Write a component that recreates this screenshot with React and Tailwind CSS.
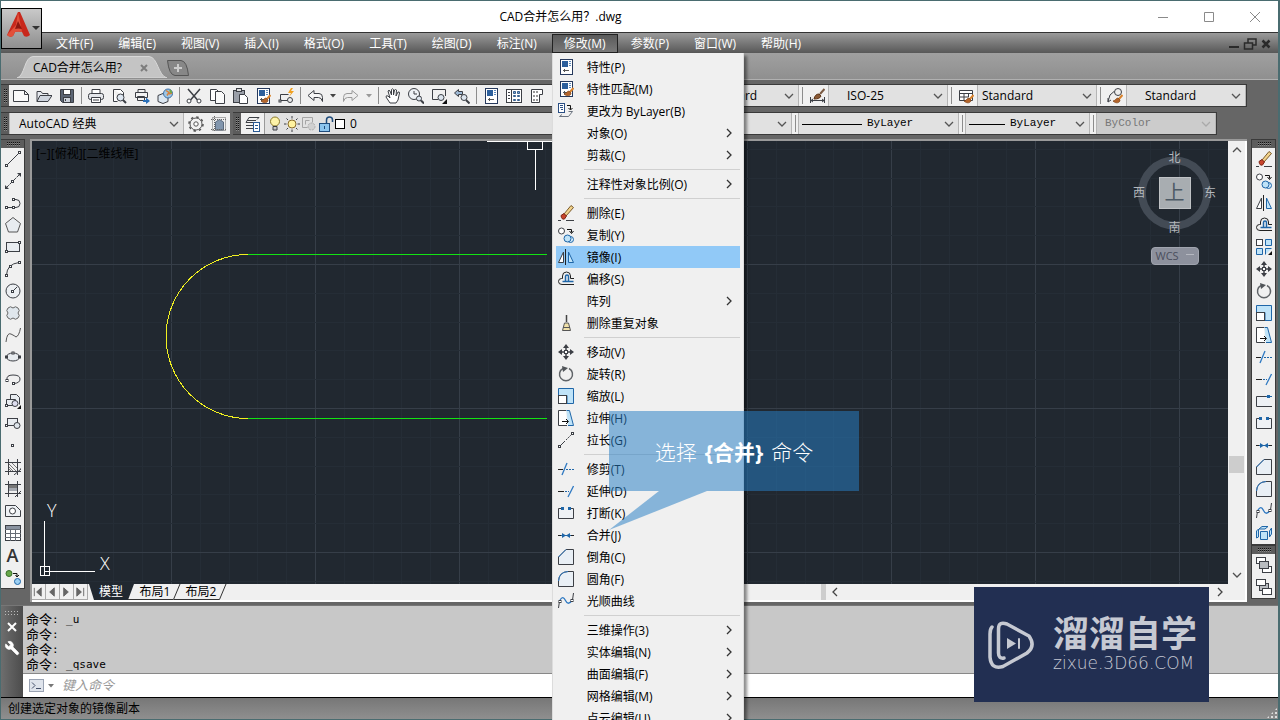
import React from "react";
import { Wrench } from "lucide-react";

const INK = "#3c3f45";
const BLUE = "#1f66a8";
const SKY = "#bfe3f8";

const Node = ({ x, y }) => (
  <rect x={x - 1} y={y - 1} width="2" height="2" fill="#fff" stroke={INK} />
);

const PropsSheet = () => (
  <>
    <rect x="2.500" y="0.500" width="12" height="15" fill="#fff" stroke="#26395c" />
    <rect x="4" y="2" width="6" height="6" fill="#2c5f9c" stroke="none" />
    <path d="M11 2.500h2M11 4.500h2M11 6.500h2" stroke="#5f8bbd" />
    <path d="M5 11.500h6M6.500 10v3" stroke="#555" />
  </>
);

const Brush = () => (
  <>
    <path d="M15.500 7L12 11" stroke="#d9822b" strokeWidth="2" />
    <path d="M6 13c2 0 3-3 5-3l2 2c0 3-4 4-7 1z" fill="#b5652a" stroke="#7b3f14" strokeWidth="0.700" />
  </>
);

const ICONS = {
  new: <path d="M0.500 2.500h11l4 4v7h-15zM11.500 2.500v4h4" fill="#fafafa" stroke={INK} />,
  open: (
    <>
      <path d="M1 13.500V3.500h4l1.500 2H12v2" fill="#e6e9ee" />
      <path d="M1 13.500l3-6h12l-4 6z" fill="#cfd5de" />
    </>
  ),
  save: (
    <>
      <path d="M1.500 1.500h13v13h-11l-2-2z" fill="#5b6473" />
      <rect x="4.500" y="1.500" width="7" height="5" fill="#fff" />
      <rect x="4.500" y="9.500" width="7" height="5" fill="#cdd3dc" />
      <path d="M6.500 11v2" />
    </>
  ),
  print: (
    <>
      <path d="M4 5.500V1.500h8v4" fill="#fff" />
      <rect x="0.500" y="5.500" width="15" height="6" rx="2" fill="#e4e6ea" />
      <path d="M3.500 9.500h9v5h-9z" fill="#fff" />
      <path d="M5 12h6" />
    </>
  ),
  preview: (
    <>
      <path d="M2.500 1.500h7l3 3v3M2.500 1.500v12h4" fill="#fff" />
      <circle cx="9.500" cy="9.500" r="3.500" fill="#dfe8f2" />
      <path d="M12 12l3 3" strokeWidth="2" />
    </>
  ),
  publish: (
    <>
      <path d="M4 4.500V1.500h7v3M1.500 4.500h12v5h-12zM3.500 8.500h7v4h-7z" fill="#f2f2f2" />
      <path d="M9 12h3V9.500l4 3.500-4 3v-2H9z" fill="#2a6fb8" stroke="none" />
    </>
  ),
  globe: (
    <>
      <path d="M1 7.500l5-2 5 2v6l-5 2-5-2z" fill="#dce7f1" />
      <circle cx="11" cy="5.500" r="4.500" fill="#9cc6e6" stroke="#3b6ea5" />
      <path d="M9 2.500l3 2-2 3M12 6l3-1" stroke="#d7803a" strokeWidth="1.500" />
      <path d="M13 2l1.500 3" stroke="#6fa843" strokeWidth="2" />
    </>
  ),
  cut: (
    <>
      <path d="M2 1l9.500 11M14 1L4.500 12" strokeWidth="1.500" />
      <circle cx="3" cy="13" r="2" fill="#fff" />
      <circle cx="13" cy="13" r="2" fill="#fff" />
    </>
  ),
  copyclip: (
    <>
      <path d="M1.500 1.500h6l3 3v8h-9z" fill="#fff" />
      <path d="M6.500 3.500h6l3 3v9h-9z" fill="#fafafa" />
    </>
  ),
  paste: (
    <>
      <rect x="1.500" y="2.500" width="11" height="12" fill="#9a9fa8" />
      <rect x="4.500" y="0.500" width="5" height="3" fill="#ddd" />
      <path d="M7.500 6.500h5l3 3v6h-8z" fill="#fff" />
    </>
  ),
  match: (
    <>
      <PropsSheet />
      <Brush />
    </>
  ),
  block: (
    <>
      <path d="M2.500 12.500V6.500h8M2.500 12.500h7" />
      <Node x={2} y={13} />
      <circle cx="12" cy="12" r="2.500" fill="#eee" />
      <path d="M13 0l-3 5h3l-2 4 5-6h-3l2-3z" fill="#f0a020" stroke="none" />
    </>
  ),
  undo: <path d="M1 7.500l6-5v3h5q3.500 0 3.500 4v4q-1-4-4-4H7v3z" fill="#f6f6f6" />,
  redo: <path d="M15 7.500l-6-5v3H4Q.5 5.500.5 9.500v4q1-4 4-4H9v3z" fill="#eee" stroke="#9a9a9a" />,
  pan: (
    <path
      d="M5 15l-4-6q0-2 2-1l2 2L3 3q1-1.500 2 0l1.500 4V1.500q1-1.500 2 0V7l1-5q1-1 2 0L11 8l2-4q1.500-.5 1.500 1L13 12l-2 3z"
      fill="#fff"
    />
  ),
  zoomrt: (
    <>
      <circle cx="6" cy="6" r="5.500" fill="#eef2f6" />
      <path d="M6 3v3h3" />
      <circle cx="11" cy="10.500" r="2.500" fill="#dde6ef" />
      <path d="M13 12.500l3 3" strokeWidth="2" />
    </>
  ),
  zoomwin: (
    <>
      <path d="M7 11.500H1.500V1.500h13V8" />
      <circle cx="10" cy="9.500" r="3" fill="#dde6ef" />
      <path d="M16 11v5h-5z" fill="#111" stroke="none" />
    </>
  ),
  zoomprev: (
    <>
      <path d="M0.500 5l4-3.500v2h4v3h-4v2z" fill="#9db8d4" />
      <circle cx="10" cy="9.500" r="3" fill="#dde6ef" />
      <path d="M12 12l3.500 3.500" strokeWidth="2" />
    </>
  ),
  props: <PropsSheet />,
  design: (
    <>
      <rect x="0.500" y="1.500" width="15" height="13" fill="#fff" />
      <path d="M5.500 1.500v13M2 4.500h2M2 7.500h2M2 10.500h2" />
      <path d="M7.500 3.500h2v2h-2zM11.500 3.500h2v2h-2zM7.500 7.500h2v1h-2zM11.500 7.500h2v1h-2zM7.500 11.500h2v1h-2zM11.500 11.500h2v1h-2z" fill="#7fa5cf" stroke="#36618f" />
    </>
  ),
  palette: (
    <>
      <path d="M2.500 1.500h11v5h-3v8h-8z" fill="#fff" />
      <path d="M4.500 3.500h1v1h-1zM7.500 3.500h1v1h-1zM4.500 7.500h1v1h-1zM7.500 7.500h1v1h-1zM4.500 11.500h1v1h-1zM7.500 11.500h1v1h-1z" stroke="#777" />
    </>
  ),
  dimstyle: (
    <>
      <path d="M1.500 9v6M15.500 9v6M2 12.500h13M2 12.500l2-1.500M2 12.500l2 1.500M15 12.500l-2-1.500M15 12.500l-2 1.500" />
      <path d="M5 11q1-5 5-5l2 2q-1 3-7 3z" fill="#8a5a36" stroke="#5d3516" />
      <path d="M11 6l4.500-5" stroke="#7a5a42" strokeWidth="2" />
    </>
  ),
  tablestyle: (
    <>
      <path d="M1.500 2.500h13v10h-13zM1.500 5.500h13M1.500 9h9M6 5v8M10.500 5v4" fill="#fff" />
      <Brush />
    </>
  ),
  mleader: (
    <>
      <path d="M1 13.500L3 7l4-3.500M1 14l3-2M1 14V10" />
      <circle cx="11" cy="4" r="3.500" fill="#eee" />
      <Brush />
    </>
  ),
  gear: (
    <>
      <circle cx="8" cy="8" r="7" strokeWidth="1.500" stroke="#555" strokeDasharray="2.500 3" />
      <circle cx="8" cy="8" r="6" fill="#f2f2f2" stroke="#555" />
      <circle cx="8" cy="8" r="2.200" fill="#fff" stroke="#555" />
    </>
  ),
  workspace: (
    <>
      <rect x="1.500" y="1.500" width="13" height="13" strokeDasharray="1 1" stroke="#666" />
      <path d="M4.500 14V6l4-2.500L12.500 6v8z" fill="#8296ad" stroke="#5c6b7e" />
      <path d="M0 3.500h16M3.500 0v16M0 13.500h16" strokeDasharray="1 1" stroke="#666" />
    </>
  ),
  layers: (
    <>
      <path d="M8 1.500h6l-2 2M1 6.500l3-5h4M1 6.500h9M1 9.500h7M1 12.500h7M2 4.500h9" />
      <rect x="8.500" y="6.500" width="6" height="9" fill="#fff" stroke="#2a5a94" />
      <path d="M10 9.500h3M10 12.500h3" stroke="#2a5a94" />
    </>
  ),
  bulb: (
    <>
      <circle cx="8" cy="5.500" r="4.500" fill="#fdf3a8" stroke="#8b7a2b" />
      <path d="M6 10.500h4v3.500H6z" fill="#c9c9c9" />
    </>
  ),
  sun: (
    <>
      <circle cx="8" cy="8" r="4" fill="#fff3a0" stroke="#8a6d2c" />
      <path d="M8 0v2.500M8 13.500V16M0 8h2.500M13.500 8H16M2.500 2.500L4 4M12 12l1.500 1.500M2.500 13.500L4 12M12 4l1.500-1.500" />
    </>
  ),
  freeze: (
    <>
      <path d="M1.500 1.500h10v5M1.500 1.500v10h5M4.500 4.500h4M4.500 4.500v4" stroke="#a5a5a5" />
      <circle cx="10.500" cy="10.500" r="3.500" fill="#d0d0d0" stroke="#aaa" strokeDasharray="2 1" />
    </>
  ),
  lock: (
    <>
      <path d="M8.500 7V4q0-3 3-3t3 3v2" stroke="#1f4c7c" strokeWidth="1.500" />
      <rect x="1.500" y="7.500" width="10" height="8" fill="#8cc5ee" stroke="#1f4c7c" />
      <path d="M6.500 10v3" stroke="#1f4c7c" />
    </>
  ),
  bylayer: (
    <>
      <rect x="0.500" y="0.500" width="6" height="9" fill="#fff" stroke="#2a4f84" />
      <path d="M2 2.500h3M2 4.500h3M3 6.500h2" stroke="#2a4f84" />
      <path d="M9 2.500h3.500v4M10.500 5l2 2 2-2" stroke="#111" />
      <path d="M1.500 13.500h9l4-5h-4M4 11.500l-2.500 2" stroke="#6c7480" />
    </>
  ),
  line: (
    <>
      <path d="M2 14L14 2" />
      <Node x={1.5} y={14.5} />
      <Node x={14.5} y={1.5} />
    </>
  ),
  xline: (
    <>
      <path d="M1 15L15 1" strokeDasharray="4 1" />
      <path d="M0 16v-4l4 4zM16 0v4l-4-4z" fill={INK} stroke="none" />
      <Node x={7.5} y={8.5} />
    </>
  ),
  pline: (
    <>
      <path d="M2 12.500h6M8 4.500h3q4 0 4 4t-4 4H8" />
      <Node x={1.5} y={12.5} />
      <Node x={8.5} y={12.5} />
      <Node x={8.5} y={4.5} />
    </>
  ),
  polygon: <path d="M8 0.500L15.500 6.500l-3 8.500h-9l-3-8.500z" fill="#e8ecf0" stroke="#555" />,
  rect: (
    <>
      <rect x="1.500" y="3.500" width="13" height="9" fill="#e8ecf0" />
      <Node x={1.5} y={12.5} />
      <Node x={14.5} y={3.5} />
    </>
  ),
  arc: (
    <>
      <path d="M1.500 14Q2 3 14 1.500" />
      <Node x={1.5} y={14.5} />
      <Node x={5.5} y={5.5} />
      <Node x={14.5} y={1.5} />
    </>
  ),
  circle: (
    <>
      <circle cx="8" cy="8" r="7" fill="#eceff2" />
      <path d="M8 8l4-4" />
      <Node x={7.5} y={8.5} />
    </>
  ),
  cloud: (
    <path
      d="M8 3A3.500 3.500 0 1 1 13 8A3.500 3.500 0 1 1 8 13A3.500 3.500 0 1 1 3 8A3.500 3.500 0 1 1 8 3z"
      fill="#dfe6ec"
      stroke="#666"
    />
  ),
  spline: <path d="M1 15Q2 5 6 7t5 3q3-1 4.500-9" stroke="#555" />,
  ellipse: (
    <>
      <ellipse cx="8" cy="8" rx="6.500" ry="4" fill="#e8ecf0" />
      <Node x={1.5} y={8} />
      <Node x={14.5} y={8} />
      <Node x={8} y={4} />
    </>
  ),
  ellipsearc: (
    <>
      <path d="M2 9Q1 4 8 4t7 4-6 4.500" />
      <Node x={2} y={9.5} />
      <Node x={8.5} y={12.5} />
    </>
  ),
  insert: (
    <>
      <path d="M5.500 6V1.500h6l3 3v7M1.500 13V6.500h9v6h-8" fill="#e8ecf0" />
      <circle cx="10" cy="10.500" r="3" fill="#dde" />
      <Node x={1.5} y={12.5} />
      <path d="M16 12v4h-4z" fill="#111" stroke="none" />
    </>
  ),
  makeblock: (
    <>
      <rect x="2.500" y="3.500" width="10" height="7" fill="#e8ecf0" />
      <circle cx="12" cy="10.500" r="3" fill="#dfe6ec" />
      <Node x={1.5} y={10.5} />
    </>
  ),
  point: <Node x={7.5} y={8.5} />,
  hatch: (
    <>
      <path d="M0 3.500h16M0 12.500h16M3.500 0v16M12.500 0v16" />
      <path d="M4 5l7 7M4 8l4 4M7 4l5 5M4 10l2 2" stroke="#777" />
      <path d="M16 9v1l-7 6" />
    </>
  ),
  gradient: (
    <>
      <rect x="4" y="4" width="8" height="3" fill="#777" stroke="none" />
      <rect x="4" y="7" width="8" height="3" fill="#a5a9b0" stroke="none" />
      <path d="M0 3.500h16M0 12.500h16M3.500 0v16M12.500 0v16M16 10l-6 6" />
    </>
  ),
  region: (
    <>
      <path d="M0.500 2.500h10l5 5v6h-15z" fill="#eef1f4" />
      <circle cx="7.500" cy="8" r="3" fill="#fff" />
    </>
  ),
  table: (
    <>
      <rect x="0.500" y="0.500" width="15" height="15" fill="#fff" />
      <rect x="1" y="1" width="14" height="3" fill="#8a93a0" stroke="none" />
      <path d="M0 4.500h16M0 8.500h16M0 12.500h16M5.500 4v12M10.500 4v12" stroke="#666c75" />
    </>
  ),
  addsel: (
    <>
      <circle cx="4" cy="4.500" r="3" fill="#67a84a" stroke="#39702a" />
      <circle cx="12.500" cy="12.500" r="3" fill="#9ccff2" stroke={BLUE} />
      <path d="M8 4.500h4v3M10.500 6l1.500 2 2-2" stroke="#111" />
    </>
  ),
  erase: (
    <>
      <path d="M6 9l7-8.500 2.500 2L8 11z" fill="#f2d38c" stroke="#7a5a2a" />
      <path d="M3 10.500l3-2 2.500 2.500-2 3q-3 1-3.500-3.500z" fill="#c8442c" stroke="#7c2415" />
      <path d="M0 15.500h3M8 15.500h8" />
    </>
  ),
  copy: (
    <>
      <circle cx="3.500" cy="4" r="3" fill="#fff" />
      <path d="M9 2.500h4.500v3M11.500 4l2 2.500 2-2.500" stroke="#111" />
      <circle cx="12.500" cy="12.500" r="3" fill="#d6ecfb" stroke={BLUE} />
      <circle cx="9.500" cy="11.500" r="3.500" fill={SKY} stroke={BLUE} />
    </>
  ),
  mirror: (
    <>
      <path d="M7.500 0v16" stroke="#222" />
      <path d="M5.500 3v10.500h-5z" fill="#fff" />
      <path d="M10.500 3v10.500h5z" fill={SKY} stroke={BLUE} />
    </>
  ),
  offset: (
    <>
      <path d="M16 13.500H4q-3.500 0-3.500-3t3-3h1V5q0-4 4-4t4 4v2.500H16" stroke="#222" />
      <path d="M15.500 10.500H4.500M7.500 10V5.500q0-1.500 1.500-1.500t1.500 1.500V10" stroke={BLUE} strokeWidth="1.500" />
    </>
  ),
  array: (
    <>
      <rect x="0.500" y="0.500" width="6" height="6" fill="#fff" />
      <path d="M9.500.5h6v6h-6zM.5 9.500h6v6h-6zM9.500 15.500v-6h6" fill={SKY} stroke={BLUE} />
      <path d="M16 12v4h-4z" fill="#111" stroke="none" />
    </>
  ),
  overkill: (
    <>
      <path d="M8.500 0v7" stroke="#444" strokeWidth="1.500" />
      <path d="M6.500 8h4l2 7.500h-8z" fill="#efe0a8" stroke="#555" />
      <path d="M5 12.500h7" stroke="#555" />
    </>
  ),
  move: (
    <>
      <path d="M8 0l3 4H5zM8 16l3-4H5zM0 8l4-3v6zM16 8l-4-3v6z" fill={INK} stroke="none" />
      <path d="M8 3v3M8 10v3M3 8h3M10 8h3" strokeWidth="1.500" />
      <rect x="6.500" y="6.500" width="3" height="3" fill="#fff" />
    </>
  ),
  rotate: (
    <>
      <path d="M5 2.500A6.500 6.500 0 1 0 11 2.500" stroke="#606468" strokeWidth="1.500" />
      <path d="M4 0l6 2-5 4z" fill="#505458" stroke="none" />
    </>
  ),
  scale: (
    <>
      <path d="M0.500 0.500h15v15H9V7.500H.5z" fill={SKY} stroke={BLUE} />
      <rect x="0.500" y="7.500" width="8" height="8" fill="#fff" />
    </>
  ),
  stretch: (
    <>
      <path d="M9 15.500H.5V.5H8" fill="#fff" />
      <path d="M8.500.5h3l4 15H10" fill={SKY} stroke={BLUE} />
      <path d="M4 11.500h6M8 9l2.500 2.500L8 14" stroke="#111" />
    </>
  ),
  lengthen: (
    <>
      <path d="M2 14L7 9" />
      <path d="M8 8l6-6" strokeDasharray="2 1" />
      <Node x={1.5} y={14.5} />
      <Node x={14.5} y={1.5} />
    </>
  ),
  trim: (
    <>
      <path d="M0 8.500h5" stroke="#222" />
      <path d="M4 14L9 2" stroke="#2f79c2" strokeWidth="1.300" />
      <path d="M8 8.500h8" stroke={BLUE} strokeDasharray="2 1" />
    </>
  ),
  extend: (
    <>
      <path d="M0 8.500h6" stroke="#222" />
      <path d="M7 8.500h4" stroke={BLUE} strokeDasharray="2 1" />
      <path d="M10 14l5.500-11" stroke="#2f79c2" strokeWidth="1.300" />
    </>
  ),
  breakpt: (
    <>
      <path d="M16 13.500H.5V3.500H10M15.500 3.500v0" fill="#eef1f5" />
      <rect x="11" y="2" width="3" height="3" fill={BLUE} stroke="none" />
      <path d="M10 3.500h6" stroke={BLUE} />
    </>
  ),
  break: (
    <>
      <path d="M3 3.500H.5v10h15v-10H13" fill="#eef1f5" />
      <path d="M3 2h3v3H3zM10 2h3v3h-3z" fill={BLUE} stroke="none" />
    </>
  ),
  join: (
    <>
      <path d="M0 8.500h3M13 8.500h3" stroke="#222" />
      <path d="M3 8.500h10" stroke={BLUE} />
      <path d="M4 6l4 2.500L4 11zM12 6L8 8.500l4 2.500z" fill={BLUE} stroke="none" />
    </>
  ),
  chamfer: (
    <>
      <path d="M.5 8L8 .5h7.500v15H.5z" fill="#e9eff5" />
      <path d="M.5 8L8 .5" stroke="#2f79c2" />
    </>
  ),
  fillet: (
    <>
      <path d="M.5 10Q1 1 10 .5h5.500v15H.5z" fill="#e9eff5" />
      <path d="M.5 10Q1 1 10 .5" stroke="#2f79c2" />
    </>
  ),
  blend: (
    <>
      <path d="M0.500 15l1-7M14.500 7l1-7" />
      <path d="M2 7q3-5 5.500 0.500t6.500 0" stroke="#2f79c2" strokeWidth="1.300" />
      <Node x={2} y={8.5} />
      <Node x={14} y={7.5} />
    </>
  ),
  explode: (
    <path
      d="M4.500 6.500h7v8h-7zM3 4l3-2.500h6L9 4zM13.500 6l2-3v6l-2 3zM.5 6l2-2v8l-2 1z"
      fill={SKY}
      stroke={BLUE}
    />
  ),
  front: (
    <>
      <rect x="0.500" y="0.500" width="9" height="6" fill="#fff" />
      <rect x="6.500" y="9.500" width="9" height="6" fill="#fff" />
      <rect x="3.500" y="4.500" width="9" height="7" fill="#b9bcc0" />
    </>
  ),
  back: (
    <>
      <rect x="3.500" y="4.500" width="9" height="7" fill="#b9bcc0" />
      <rect x="0.500" y="0.500" width="9" height="6" fill="#fff" />
      <rect x="6.500" y="9.500" width="9" height="6" fill="#fff" />
    </>
  ),
};

const Icon = ({ name }) => (
  <svg viewBox="0 0 16 16" className="w-4 h-4 shrink-0" fill="none" stroke={INK} aria-hidden="true">
    {ICONS[name]}
  </svg>
);

const Chevron = ({ className = "", d = "M1 3l4 4 4-4" }) => (
  <svg viewBox="0 0 10 10" className={`w-2.5 h-2.5 ${className}`} fill="none" stroke="currentColor" strokeWidth="1.300" aria-hidden="true">
    <path d={d} />
  </svg>
);

const Grip = ({ horizontal }) => (
  <div className={`shrink-0 self-stretch flex items-center justify-center bg-[#5c5c5c] ${horizontal ? "h-2" : "w-2"}`}>
    <div
      className={`bg-[conic-gradient(#111_25%,#888_25%_50%,#5c5c5c_50%)] bg-[length:2px_2px] ${horizontal ? "h-1 w-3.5" : "w-1 h-3.5"}`}
    />
  </div>
);

const Tool = ({ name, letter }) => (
  <button aria-label={name} className="w-[23px] h-[22px] shrink-0 flex items-center justify-center">
    {letter ? <span className="text-lg leading-none font-semibold text-[#333]">{letter}</span> : <Icon name={name} />}
  </button>
);

const Sep = () => (
  <div className="w-1.5 self-stretch shrink-0 flex justify-center py-0.5">
    <div className="w-px bg-[#8c8c8c]" />
  </div>
);

const DropArrow = ({ dim }) => (
  <span className="w-[13px] shrink-0 flex justify-center">
    <svg viewBox="0 0 6 4" className={`w-1.5 h-1 ${dim ? "fill-[#999]" : "fill-[#444]"}`} aria-hidden="true">
      <path d="M0 0h6L3 3.500z" />
    </svg>
  </span>
);

const Combo = ({ label, value, width = "w-[120px]", inner = "pl-1 text-xs", rule, disabled }) => (
  <div className={`relative self-stretch flex shrink-0 ${width}`}>
    <select
      aria-label={label}
      disabled={disabled}
      className={`appearance-none w-full border-x border-[#b5b5b5] ${disabled ? "bg-[#cccccc] text-[#777]" : "bg-[#e1e1e1] text-black"} ${inner}`}
    >
      <option>{value}</option>
    </select>
    {rule && <div className={`absolute left-1 top-1/2 h-px bg-black pointer-events-none ${rule}`} />}
    <Chevron className={`absolute right-[5px] top-[6px] pointer-events-none ${disabled ? "text-[#aaa]" : "text-[#555]"}`} />
  </div>
);

const MENU_BAR = [
  "文件(F)",
  "编辑(E)",
  "视图(V)",
  "插入(I)",
  "格式(O)",
  "工具(T)",
  "绘图(D)",
  "标注(N)",
  "修改(M)",
  "参数(P)",
  "窗口(W)",
  "帮助(H)",
];

// null marks a separator
const MODIFY_MENU = [
  { text: "特性(P)", icon: "props" },
  { text: "特性匹配(M)", icon: "match" },
  { text: "更改为 ByLayer(B)", icon: "bylayer" },
  { text: "对象(O)", sub: true },
  { text: "剪裁(C)", sub: true },
  null,
  { text: "注释性对象比例(O)", sub: true },
  null,
  { text: "删除(E)", icon: "erase" },
  { text: "复制(Y)", icon: "copy" },
  { text: "镜像(I)", icon: "mirror", active: true },
  { text: "偏移(S)", icon: "offset" },
  { text: "阵列", sub: true },
  { text: "删除重复对象", icon: "overkill" },
  null,
  { text: "移动(V)", icon: "move" },
  { text: "旋转(R)", icon: "rotate" },
  { text: "缩放(L)", icon: "scale" },
  { text: "拉伸(H)", icon: "stretch" },
  { text: "拉长(G)", icon: "lengthen" },
  null,
  { text: "修剪(T)", icon: "trim" },
  { text: "延伸(D)", icon: "extend" },
  { text: "打断(K)", icon: "break" },
  { text: "合并(J)", icon: "join" },
  { text: "倒角(C)", icon: "chamfer" },
  { text: "圆角(F)", icon: "fillet" },
  { text: "光顺曲线", icon: "blend" },
  null,
  { text: "三维操作(3)", sub: true },
  { text: "实体编辑(N)", sub: true },
  { text: "曲面编辑(F)", sub: true },
  { text: "网格编辑(M)", sub: true },
  { text: "点云编辑(U)", sub: true },
];

const DRAW_TOOLS = [
  "line", "xline", "pline", "polygon", "rect", "arc", "circle", "cloud", "spline", "ellipse",
  "ellipsearc", "insert", "makeblock", "point", "hatch", "gradient", "region", "table", "text", "addsel",
];

const MODIFY_TOOLS = [
  "erase", "copy", "mirror", "offset", "array", "move", "rotate", "scale", "stretch",
  "trim", "extend", "breakpt", "break", "join", "chamfer", "fillet", "blend", "explode",
];

const STANDARD_TOOLS = [
  "new", "open", "save", "|", "print", "preview", "publish", "globe", "|",
  "cut", "copyclip", "paste", "match", "block", "|", "undo", "v", "redo", "v-", "|",
  "pan", "zoomrt", "zoomwin", "zoomprev", "|", "props", "design", "palette", "table", "region", "layers", "gear",
];

const ModifyMenu = () => (
  <div
    role="menu"
    className="absolute left-0 top-full z-30 w-48 p-[3px] bg-[#f0f0f0] border-x border-[#dcdcdc] shadow-[3px_3px_3px_rgba(0,0,0,0.45)] text-black"
  >
    {MODIFY_MENU.map((item, index) =>
      item ? (
        <button
          key={item.text}
          role="menuitem"
          className={`w-full h-[22px] flex items-center pl-0.5 pr-1.5 text-xs text-left whitespace-nowrap ${item.active ? "bg-[#91c9f7]" : ""}`}
        >
          <span className="w-[29px] shrink-0">{item.icon && <Icon name={item.icon} />}</span>
          <span className="flex-1 pt-px">{item.text}</span>
          {item.sub && <Chevron d="M3 1l4 4-4 4" className="text-[#333]" />}
        </button>
      ) : (
        <div key={index} className="h-[7px] flex items-center pl-7">
          <div className="w-full h-px bg-[#d0d0d0]" />
        </div>
      ),
    )}
  </div>
);

const TitleBar = () => (
  <div className="h-[31px] shrink-0 bg-white flex items-center">
    <h1 className="flex-1 text-center text-xs pr-5 text-black">CAD合并怎么用？.dwg</h1>
    {["M3 8.500h10", "M3.500 3.500h9v9h-9z", "M3 3l10 10M13 3L3 13"].map((d) => (
      <button key={d} aria-label="window control" className="w-[46px] h-full flex items-center justify-center">
        <svg viewBox="0 0 16 16" className="w-4 h-4" fill="none" stroke="#8a8a8a">
          <path d={d} />
        </svg>
      </button>
    ))}
  </div>
);

const MenuBar = () => (
  <nav className="h-[21px] shrink-0 flex items-stretch gap-px pl-[43px] pr-1 pt-px border-t border-[#333] bg-linear-to-b from-[#9b9b9b] to-[#585858] text-white">
    {MENU_BAR.map((text) =>
      text === "修改(M)" ? (
        <div key={text} className="relative flex ml-0.5">
          <button className="px-[11px] border border-[#222] bg-linear-to-b from-[#5a5a5a] to-[#7a7a7a] text-xs whitespace-nowrap">
            {text}
          </button>
          <ModifyMenu />
        </div>
      ) : (
        <button key={text} className="px-3 text-xs whitespace-nowrap">
          {text}
        </button>
      ),
    )}
    <div className="ml-auto flex items-center">
      <button aria-label="minimize drawing">
        <svg viewBox="0 0 16 16" className="w-4 h-4" fill="none" stroke="#2a2a2a" strokeWidth="2">
          <path d="M3 11h10" />
        </svg>
      </button>
      <button aria-label="restore drawing">
        <svg viewBox="0 0 16 16" className="w-4 h-4" fill="none" stroke="#2a2a2a" strokeWidth="1.500">
          <path d="M6 7V3h8v6h-3M2.500 7h8v6h-8z" />
        </svg>
      </button>
      <button aria-label="close drawing">
        <svg viewBox="0 0 16 16" className="w-4 h-4" fill="none" stroke="#2a2a2a" strokeWidth="2.500">
          <path d="M4.500 4.500l7 7M11.500 4.500l-7 7" />
        </svg>
      </button>
    </div>
  </nav>
);

const FileTabs = () => (
  <div className="h-[27px] shrink-0 flex items-end pl-4 pb-px border-b border-[#b0b0b0] bg-linear-to-b from-[#a0a0a0] to-[#8f8f8f]">
    <div className="relative w-[150px] h-[22px] flex items-center pl-4 pt-0.5">
      <svg viewBox="0 0 150 22" className="absolute inset-0 w-full h-full" preserveAspectRatio="none">
        <path d="M0 22C8 20 7 1 16 .5H132C141 1 141 20 150 22z" fill="#c4c4c4" stroke="#d8d8d8" />
      </svg>
      <span className="relative flex-1 text-xs text-black whitespace-nowrap">CAD合并怎么用?</span>
      <button aria-label="close tab" className="relative mr-[19px]">
        <svg viewBox="0 0 8 8" className="w-2 h-2" stroke="#7d7d7d" strokeWidth="2">
          <path d="M1 1l6 6M7 1L1 7" />
        </svg>
      </button>
    </div>
    <button aria-label="new tab" className="pb-0.5">
      <svg viewBox="0 0 22 16" className="w-[22px] h-4" fill="none">
        <path d="M.5 .5H14Q20 1 21.500 15.500H8Q2 15 .5 .5z" fill="#878787" stroke="#555" />
        <path d="M11 4v8M7 8h8" stroke="#ccc" strokeWidth="2" />
      </svg>
    </button>
  </div>
);

const Toolbars = () => (
  <div className="shrink-0 flex flex-col gap-[5px] py-1">
    <div className="h-[23px] flex gap-2">
      <div className="flex items-center border-y border-[#3a3a3a] bg-[#f0f0f0] shrink-0">
        <Grip />
        {STANDARD_TOOLS.map((name, index) => {
          if (name === "|") return <Sep key={index} />;
          if (name === "v") return <DropArrow key={index} />;
          if (name === "v-") return <DropArrow key={index} dim />;
          return <Tool key={index} name={name} />;
        })}
      </div>
      <div className="flex items-center border-y border-r border-[#3a3a3a] bg-[#f0f0f0] shrink-0">
        <Grip />
        <Tool name="mleader" />
        <Combo label="text style" value="Standard" inner="pl-[26px] text-xs" />
        <Sep />
        <Tool name="dimstyle" />
        <Combo label="dimension style" value="ISO-25" inner="pl-[18px] text-xs" />
        <Sep />
        <Tool name="tablestyle" />
        <Combo label="table style" value="Standard" inner="pl-1 text-xs" />
        <Sep />
        <Tool name="mleader" />
        <Combo label="multileader style" value="Standard" inner="pl-[18px] text-xs" />
      </div>
    </div>

    <div className="h-[23px] flex">
      <div className="flex items-center border-y border-[#3a3a3a] bg-[#f0f0f0] shrink-0 mr-[3px]">
        <Grip />
        <Combo label="workspace" value="AutoCAD 经典" width="w-[175px]" inner="pl-[9px] text-xs" />
        <Tool name="gear" />
        <Tool name="workspace" />
      </div>
      <div className="w-[408px] flex items-center border-y border-[#3a3a3a] bg-[#f0f0f0] shrink-0">
        <Grip />
        <Tool name="layers" />
        <button
          aria-label="current layer"
          className="flex-1 self-stretch flex items-center gap-px pl-0.5 border-l border-[#999] bg-[#e1e1e1] text-xs text-black"
        >
          <Icon name="bulb" />
          <Icon name="sun" />
          <Icon name="freeze" />
          <Icon name="lock" />
          <span className="w-2.5 h-2.5 border border-black bg-white mr-1" />0
        </button>
      </div>
      <div className="flex items-center border-y border-r border-[#3a3a3a] bg-[#f0f0f0] shrink-0">
        <Combo label="color" value="ByLayer" width="w-[151px]" inner="pl-6 text-xs" />
        <Sep />
        <Combo
          label="linetype"
          value="ByLayer"
          width="w-[161px]"
          rule="w-[60px]"
          inner="pl-[68px] text-[11px] font-['Liberation_Mono',monospace]"
        />
        <Sep />
        <Combo
          label="lineweight"
          value="ByLayer"
          width="w-[125px]"
          rule="w-9"
          inner="pl-11 text-[11px] font-['Liberation_Mono',monospace]"
        />
        <Sep />
        <Combo
          label="plot style"
          value="ByColor"
          disabled
          inner="pl-2 text-[11px] font-['Liberation_Mono',monospace]"
        />
      </div>
    </div>
  </div>
);

const range = (n) => Array.from({ length: n }, (_, i) => i);

const Drawing = () => (
  <svg className="absolute inset-0 w-full h-full" fill="none" shapeRendering="crispEdges">
    {range(90).map((i) => {
      const x = 139.5 + (i - 4) * 28.8;
      return <path key={`v${i}`} d={`M${x} 0V2000`} stroke={i % 5 === 4 ? "#363e48" : "#252d36"} />;
    })}
    {range(60).map((i) => {
      const y = 123.5 + (i - 4) * 28.8;
      return <path key={`h${i}`} d={`M0 ${y}H3000`} stroke={i % 5 === 4 ? "#363e48" : "#252d36"} />;
    })}
    <path d="M216 113.500H515M216 277.500H515" stroke="#12e312" />
    <path d="M216 113.500A82 82 0 0 0 216 277.500" stroke="#f0f020" />
    <path d="M455 .5H530M495.500 .5h15v8h-15zM503.500 8V49" stroke="#fff" />
    <path d="M12.500 380V434M12 430.500H63M8.500 425.500h9v9h-9z" stroke="#fff" />
    <g fill="#fff" stroke="none" className="text-lg font-light font-['Open_Sans',sans-serif]">
      <text x="15" y="376">Y</text>
      <text x="68" y="429">X</text>
    </g>
  </svg>
);

const ViewCube = () => (
  <div className="absolute right-3 top-2.5 w-[83px] flex flex-col items-center text-xs text-[#b4b8bc]">
    <div className="relative w-full h-[84px] flex flex-col items-center justify-between leading-[14px]">
      <svg viewBox="0 0 84 84" className="absolute inset-0 w-full h-full" fill="none">
        <circle cx="42" cy="42" r="33" stroke="#434b55" strokeWidth="8" />
      </svg>
      <span className="relative">北</span>
      <div className="relative w-full flex items-center justify-between">
        <span>西</span>
        <span className="w-8 h-8 flex items-center justify-center bg-[#a8adb1] border border-[#bfc2c5] text-xl text-[#4d5a66]">上</span>
        <span>东</span>
      </div>
      <span className="relative">南</span>
    </div>
    <button className="mt-3 w-12 h-[18px] rounded flex items-center justify-between px-1 bg-[#8d919d] border border-[#a0a4ae] text-[11px] text-[#4a4e5c]">
      WCS
      <span className="w-2 h-1 border-t border-[#b5b8c0]" />
    </button>
  </div>
);

const LayoutTab = ({ text, active }) => (
  <button className={`relative w-[46px] h-full text-xs leading-4 ${active ? "text-white" : "pr-1 text-black"}`}>
    <svg viewBox="0 0 46 16" className="absolute inset-0 w-full h-full overflow-visible">
      {active ? (
        <path d="M1 0H46L40 16H6z" fill="#212830" />
      ) : (
        <path d="M46 0L39.500 15.500H-6" fill="none" stroke="#333" />
      )}
    </svg>
    <span className="relative">{text}</span>
  </button>
);

const Viewport = () => (
  <main className="flex-1 min-w-0 flex flex-col ml-[5px] mr-1 border-l-2 border-t-2 border-[#9a9a9a]">
    <div className="flex-1 min-h-0 flex border-r-2 border-white">
      <div className="relative flex-1 overflow-hidden bg-[#212830]">
        <Drawing />
        <p className="absolute left-1 top-1 text-xs leading-[18px] text-black">[−][俯视][二维线框]</p>
        <ViewCube />
      </div>
      <div className="w-[17px] shrink-0 bg-[#f0f0f0] flex flex-col items-center justify-between py-1 text-[#505050]">
        <Chevron d="M1 7l4-4 4 4" />
        <div className="w-[15px] flex-1 flex flex-col my-1">
          <div className="flex-[301]" />
          <div className="h-[17px] bg-[#cdcdcd]" />
          <div className="flex-[94]" />
        </div>
        <Chevron />
      </div>
    </div>
    <div className="h-[18px] shrink-0 flex items-stretch pb-0.5 bg-white border-r-2 border-white">
      <div className="flex items-stretch w-full bg-[#f0f0f0]">
        <div className="flex w-14 shrink-0">
          {["M2.500 2v9M10 2v9L5 6.500z", "M9 2v9L4 6.500z", "M4 2v9l5-4.500z", "M10.500 2v9M3 2v9l5-4.500z"].map((d) => (
            <button key={d} aria-label="tab scroll" className="w-3.5 border-r border-b border-[#aaa] flex items-center">
              <svg viewBox="0 0 13 13" className="w-3 h-3" fill="#666" stroke="#666">
                <path d={d} />
              </svg>
            </button>
          ))}
        </div>
        <LayoutTab text="模型" active />
        <LayoutTab text="布局1" />
        <LayoutTab text="布局2" />
        <div className="flex-[595]" />
        <div className="w-[5px] bg-[#cdcdcd]" />
        <div className="flex-[395] flex items-center justify-between pl-1 pr-5 text-[#444]">
          <Chevron d="M7 1L3 5l4 4" />
          <Chevron d="M3 1l4 4-4 4" />
        </div>
      </div>
    </div>
  </main>
);

const CommandPanel = () => (
  <section className="h-[92px] shrink-0 flex mt-[3px] border-t border-[#777]">
    <div className="w-[22px] shrink-0 flex flex-col items-center pt-1 bg-linear-to-r from-[#6e6e6e] to-[#4c4c4c] text-white">
      <div className="w-4 h-1.5 bg-[radial-gradient(#bbb_35%,transparent_40%)] bg-[length:3px_3px]" />
      <button aria-label="close command line" className="mt-1.5">
        <svg viewBox="0 0 10 10" className="w-2.5 h-2.5" stroke="#fff" strokeWidth="2">
          <path d="M1 1l8 8M9 1L1 9" />
        </svg>
      </button>
      <button aria-label="customize" className="mt-2">
        <Wrench className="w-4 h-4 -scale-x-100" fill="#fff" strokeWidth={1} />
      </button>
    </div>
    <div className="flex-1 flex flex-col">
      <div className="flex-1 bg-[#c8c8c8] border-b border-[#888] pl-[3px] pt-1.5 text-black">
        {["_u", "", "", "_qsave"].map((cmd, index) => (
          <p
            key={index}
            className="h-[15px] flex items-center text-[11px] leading-[15px] font-['DejaVu_Sans_Mono','Noto_Sans_CJK_SC',monospace]"
          >
            <span className="text-[13px]">命令</span>
            <span className="w-3.5">:</span>
            <span>{cmd}</span>
          </p>
        ))}
      </div>
      <div className="h-[23px] flex items-center pl-1.5 bg-white">
        <button aria-label="recent commands" className="flex items-center gap-1">
          <svg viewBox="0 0 15 13" className="w-[15px] h-[13px]" fill="none" stroke="#44506a">
            <rect x="0.500" y="0.500" width="14" height="12" fill="#dfe4ec" stroke="#9aa3b3" />
            <path d="M3 3.500l3 3-3 3M7 9.500h5" />
          </svg>
          <svg viewBox="0 0 6 4" className="w-1.5 h-1" fill="#777">
            <path d="M0 0h6L3 3.500z" />
          </svg>
        </button>
        <input
          aria-label="command"
          placeholder="键入命令"
          className="flex-1 ml-2 text-[13px] italic outline-none placeholder:text-[#999]"
        />
      </div>
    </div>
  </section>
);

const Callout = () => (
  <div className="absolute z-40 left-[609px] top-[411px] w-[250px]">
    <p className="h-20 pt-1 flex items-center justify-center gap-2 bg-[rgba(39,126,196,0.53)] text-white text-[21px] font-light whitespace-nowrap">
      选择 <b className="font-bold">{"{合并}"}</b> 命令
    </p>
    <svg viewBox="0 0 250 40" className="block w-full h-10">
      <path d="M50 0H98L0 39z" fill="rgba(39,126,196,0.53)" />
    </svg>
  </div>
);

const Watermark = () => (
  <div className="absolute z-40 right-[71px] bottom-[18px] w-[235px] h-[115px] flex items-center gap-[18px] pl-[13px] bg-[#222f52] text-[#c6c9d2]">
    <svg viewBox="0 0 48 50" className="w-12 h-[50px]" fill="none" stroke="currentColor" strokeWidth="3.500" strokeLinecap="round">
      <path d="M5 7Q3 9 3 14V37Q4 50 16 46.500L40 33Q49 26 42 16L20 4Q11.500 1 11.500 9V33Q11.500 39 17 38" />
      <path d="M20 18v11l9-5.500z" fill="currentColor" stroke="none" />
      <path d="M32 19v9" strokeWidth="2" />
    </svg>
    <div className="flex flex-col">
      <span className="text-4xl leading-9 font-bold whitespace-nowrap font-['Liberation_Sans','Noto_Sans_CJK_SC',sans-serif]">
        溜溜自学
      </span>
      <span className="text-[17px] leading-5 font-['DejaVu_Sans',sans-serif] font-extralight">zixue.3D66.COM</span>
    </div>
  </div>
);

const App = () => {
  return (
    <div className="relative h-screen w-full flex flex-col overflow-hidden bg-[#4a6c70] p-px pr-0.5 font-['Open_Sans','Noto_Sans_CJK_SC',sans-serif]">
      <TitleBar />
      <MenuBar />
      <div className="flex-1 min-h-0 flex flex-col bg-[#666666]">
        <FileTabs />
        <Toolbars />
        <div className="flex-1 min-h-0 flex">
          <aside className="w-6 shrink-0">
            <div className="flex flex-col border-y border-r border-[#3a3a3a] bg-[#f0f0f0]">
              <Grip horizontal />
              {DRAW_TOOLS.map((name) => (
                <Tool key={name} name={name} letter={name === "text" ? "A" : undefined} />
              ))}
            </div>
          </aside>
          <Viewport />
          <aside className="w-[25px] shrink-0 mr-0.5">
            <div className="flex flex-col border border-[#3a3a3a] bg-[#f0f0f0]">
              <Grip horizontal />
              {MODIFY_TOOLS.map((name) => (
                <Tool key={name} name={name} />
              ))}
            </div>
            <div className="flex flex-col border border-[#3a3a3a] bg-[#f0f0f0]">
              <Grip horizontal />
              <Tool name="front" />
              <Tool name="back" />
            </div>
          </aside>
        </div>
        <CommandPanel />
      </div>
      <footer className="h-[22px] shrink-0 flex items-center justify-between pl-[7px] border-t border-black bg-linear-to-b from-[#777] to-[#8f8f8f] text-xs text-black">
        创建选定对象的镜像副本
        <div className="w-3 h-3 self-end bg-[radial-gradient(#ddd_40%,transparent_45%)] bg-[length:4px_4px] [clip-path:polygon(100%_0,100%_100%,0_100%)]" />
      </footer>
      <button
        aria-label="application menu"
        className="absolute left-px top-2 w-[41px] h-[41px] flex items-center border border-black bg-linear-to-b from-[#c9c9c9] to-[#8f8f8f]"
      >
        <svg viewBox="0 0 39 39" className="w-full h-full">
          <path d="M16 3L5 26q3 3 6 1l2-4q3-1 7 0l2 4q3 2 6-1L18 3z" fill="#c8281c" />
          <path d="M16 3l-2 13-9 10q3 3 6 1l2-4q3-1 7 0z" fill="#e2503a" />
          <path d="M16 12l-3 8q3-1 7 0z" fill="#8e1710" />
          <path d="M30 17h8l-4 4z" fill="#333" />
        </svg>
      </button>
      <Callout />
      <Watermark />
    </div>
  );
};

export default App;
